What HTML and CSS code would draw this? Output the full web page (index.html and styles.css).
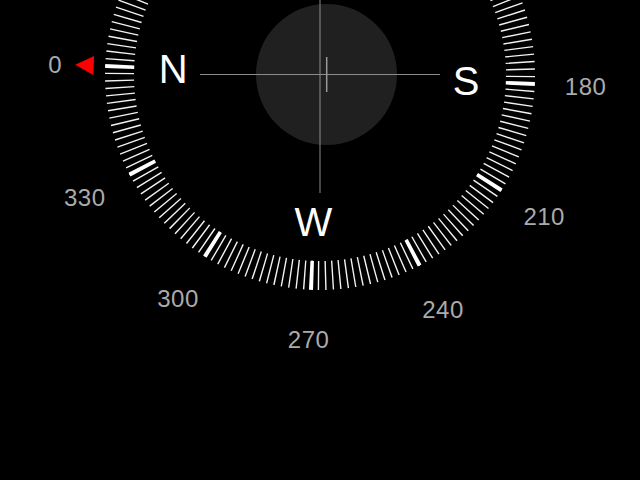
FILE: index.html
```html
<!DOCTYPE html>
<html lang="en">
<head>
    <meta charset="UTF-8">
    <meta name="viewport" content="width=device-width, initial-scale=1.0">
    <title>Compass</title>
    <link rel="stylesheet" href="styles.css">
</head>
<body>
    <div class="screen">
        <svg class="compass" viewBox="0 0 640 480" width="640" height="480">
            <!-- level bubble -->
            <circle class="bubble" cx="326.5" cy="74.5" r="70.5"/>

            <!-- dial, rotated to the current heading -->
            <g transform="rotate(2.4 320 75)">
                <circle class="ticks" cx="320" cy="75" r="200.5" pathLength="360"/>
                <circle class="ticks-major" cx="320" cy="75" r="200.5" pathLength="360"/>
                <polygon class="marker" points="75,75 93.5,65.5 93.5,84.5"/>
            </g>

            <!-- crosshair -->
            <line class="cross" x1="200" y1="74.5" x2="440" y2="74.5"/>
            <line class="cross" x1="320" y1="0" x2="320" y2="193"/>
            <line class="cross-small" x1="326.7" y1="57" x2="326.7" y2="92"/>

            <!-- cardinal points -->
            <text class="cardinal" x="173.3" y="83">N</text>
            <text class="cardinal" x="466" y="95">S</text>
            <text class="cardinal" x="313.3" y="235.5">W</text>

            <!-- degrees -->
            <text class="degree" x="55.3" y="73.2">0</text>
            <text class="degree" x="84.8" y="206.3">330</text>
            <text class="degree" x="178" y="307.2">300</text>
            <text class="degree" x="308.6" y="348.3">270</text>
            <text class="degree" x="443" y="318.3">240</text>
            <text class="degree" x="544.2" y="225.3">210</text>
            <text class="degree" x="585.6" y="95">180</text>
        </svg>
    </div>
</body>
</html>
```
FILE: styles.css
```css
/* Basic Reset */
* {
    margin: 0;
    padding: 0;
    box-sizing: border-box;
}

body {
    background-color: #000;
    font-family: "Liberation Sans", Arial, sans-serif;
    overflow: hidden;
}

.screen {
    width: 640px;
    height: 480px;
}

.compass {
    display: block;
}

.bubble {
    fill: #202020;
}

/* ring of ticks, one every 2 degrees */
.ticks {
    fill: none;
    stroke: #f2f2f2;
    stroke-width: 29;
    stroke-dasharray: 0.4 1.6;
    stroke-dashoffset: 0.2;
}

/* bold tick every 30 degrees */
.ticks-major {
    fill: none;
    stroke: #fff;
    stroke-width: 29;
    stroke-dasharray: 1.1 28.9;
    stroke-dashoffset: 0.55;
}

.marker {
    fill: #ff0000;
}

.cross {
    stroke: #8c8c8c;
    stroke-width: 1;
}

.cross-small {
    stroke: #9a9a9a;
    stroke-width: 1.5;
}

.cardinal {
    fill: #fff;
    font-size: 40px;
    text-anchor: middle;
}

.degree {
    fill: #ababab;
    font-size: 24px;
    letter-spacing: 0.5px;
    text-anchor: middle;
}
```
